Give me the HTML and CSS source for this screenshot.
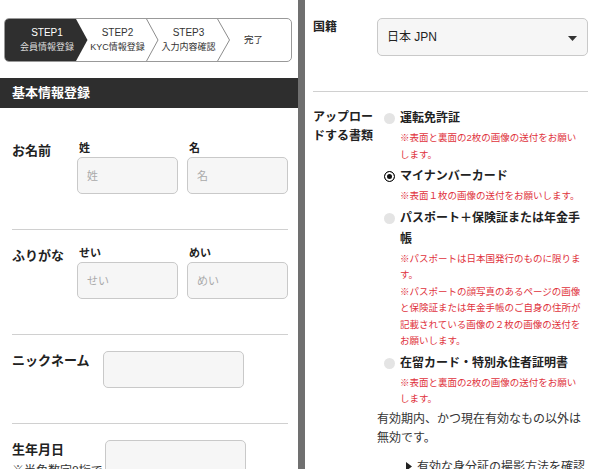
FILE: index.html
```html
<!DOCTYPE html>
<html lang="ja">
<head>
	<title>会員登録</title>
	<meta charset="utf-8">
	<link rel="stylesheet" href="styles.css">
</head>
<body>
	<div class="screens">
		<div class="screen screen_left">
			<div class="steps">
				<svg class="steps_bg" viewBox="0 0 286 42" preserveAspectRatio="none">
					<polygon points="0,0 71,0 82.5,21 71,42 0,42" fill="#2f2f2f"/>
					<polyline points="141,-1 153,21 141,43" fill="none" stroke="#8c8c8c" stroke-width="1"/>
					<polyline points="212,-1 224.5,21 212,43" fill="none" stroke="#8c8c8c" stroke-width="1"/>
				</svg>
				<div class="step step_current">
					<span class="step_name">STEP1</span>
					<span>会員情報登録</span>
				</div>
				<div class="step">
					<span class="step_name">STEP2</span>
					<span>KYC情報登録</span>
				</div>
				<div class="step">
					<span class="step_name">STEP3</span>
					<span>入力内容確認</span>
				</div>
				<div class="step step_last">
					<span>完了</span>
				</div>
			</div>

			<h2 class="section_title">基本情報登録</h2>

			<div class="form">
				<div class="row">
					<div class="row_label">お名前</div>
					<div class="name_fields">
						<div class="field">
							<div class="field_label">姓</div>
							<input class="text_input" type="text" placeholder="姓">
						</div>
						<div class="field">
							<div class="field_label">名</div>
							<input class="text_input" type="text" placeholder="名">
						</div>
					</div>
				</div>
				<div class="row">
					<div class="row_label">ふりがな</div>
					<div class="name_fields">
						<div class="field">
							<div class="field_label">せい</div>
							<input class="text_input" type="text" placeholder="せい">
						</div>
						<div class="field">
							<div class="field_label">めい</div>
							<input class="text_input" type="text" placeholder="めい">
						</div>
					</div>
				</div>
				<div class="row">
					<div class="row_label label_nick">ニックネーム</div>
					<input class="text_input text_input_short" type="text">
				</div>
				<div class="row row_open">
					<div class="row_label label_birth">生年月日
						<div class="row_hint">※半角数字8桁で</div>
					</div>
					<input class="text_input text_input_short" type="text">
				</div>
			</div>
		</div>

		<div class="screen_divider"></div>

		<div class="screen screen_right">
			<div class="row row_first">
				<div class="row_label">国籍</div>
				<div class="select_wrap">
					<select class="select">
						<option>日本 JPN</option>
					</select>
					<svg class="select_caret" viewBox="0 0 9 5"><polygon points="0,0 9,0 4.5,5" fill="#333"/></svg>
				</div>
			</div>
			<div class="row row_open">
				<div class="row_label">アップロードする書類</div>
				<div class="upload">
					<div class="options">
						<div class="option">
							<span class="radio"></span>
							<div class="option_body">
								<div class="option_title">運転免許証</div>
								<p class="note">※表面と裏面の2枚の画像の送付をお願いします。</p>
							</div>
						</div>
						<div class="option">
							<span class="radio radio_checked"></span>
							<div class="option_body">
								<div class="option_title">マイナンバーカード</div>
								<p class="note">※表面１枚の画像の送付をお願いします。</p>
							</div>
						</div>
						<div class="option">
							<span class="radio"></span>
							<div class="option_body">
								<div class="option_title">パスポート＋保険証または年金手帳</div>
								<p class="note">※パスポートは日本国発行のものに限ります。</p>
								<p class="note">※パスポートの顔写真のあるページの画像と保険証または年金手帳のご自身の住所が記載されている画像の２枚の画像の送付をお願いします。</p>
							</div>
						</div>
						<div class="option">
							<span class="radio"></span>
							<div class="option_body">
								<div class="option_title">在留カード・特別永住者証明書</div>
								<p class="note">※表面と裏面の2枚の画像の送付をお願いします。</p>
							</div>
						</div>
					</div>
					<p class="valid_note">有効期内、かつ現在有効なもの以外は無効です。</p>
					<a class="howto">
						<svg class="howto_arrow" viewBox="0 0 6 9"><polygon points="0,0 6,4.5 0,9" fill="#222"/></svg>
						有効な身分証の撮影方法を確認
					</a>
				</div>
			</div>
		</div>
	</div>
</body>
</html>
```

FILE: styles.css
```css
*{
	box-sizing:border-box;
	margin:0;
	padding:0;
}
body{
	font-family:"Liberation Sans","Noto Sans CJK JP",sans-serif;
	color:#222;
	background:#fff;
}
.screens{
	display:flex;
	height:469px;
	overflow:hidden;
}
.screen_left{
	width:298px;
	flex:none;
}
.screen_divider{
	width:7px;
	flex:none;
	background:#707070;
}
.screen_right{
	flex:1;
	padding:0 12px 0 8px;
}

/* step bar */
.steps{
	position:relative;
	display:flex;
	height:44px;
	margin:18px 6px 0 4px;
	padding-left:7px;
	border:1px solid #999;
	border-radius:5px;
	overflow:hidden;
}
.steps_bg{
	position:absolute;
	left:0;
	top:0;
	width:100%;
	height:100%;
}
.step{
	position:relative;
	width:71px;
	flex:none;
	display:flex;
	flex-direction:column;
	justify-content:center;
	align-items:center;
	font-size:9px;
	line-height:14px;
	color:#333;
	white-space:nowrap;
}
.step:first-of-type{
	width:70px;
}
.step_name{
	font-size:10px;
}
.step_current{
	color:#ddd;
}
.step_current .step_name{
	color:#fff;
}
.step_last{
	flex:1;
	padding-right:8px;
	font-size:9.5px;
}

.section_title{
	margin-top:16px;
	height:30px;
	padding-left:12px;
	background:#2e2e2e;
	color:#fff;
	font-size:13px;
	line-height:30px;
}

/* form rows */
.form{
	padding:17px 10px 0 12px;
}
.row{
	display:flex;
	align-items:flex-start;
	padding:16px 0 35px;
	border-bottom:1px solid #d0d0d0;
}
.row_open{
	border-bottom:none;
}
.row_first{
	padding-top:18px;
}
.row_label{
	flex:none;
	width:65px;
	font-size:13px;
	font-weight:bold;
	line-height:19px;
}
.label_nick{
	width:91px;
}
.label_birth{
	width:93px;
}
.row_hint{
	margin-top:4px;
	font-size:12px;
	font-weight:normal;
	line-height:16px;
	color:#333;
	white-space:nowrap;
}
.name_fields{
	flex:1;
	display:grid;
	grid-template-columns:1fr 1fr;
	column-gap:9px;
}
.field_label{
	padding-left:2px;
	margin-bottom:2px;
	font-size:11px;
	font-weight:bold;
	line-height:14px;
}
.text_input{
	display:block;
	width:100%;
	height:37px;
	padding:0 9px;
	border:1px solid #c9c9c9;
	border-radius:5px;
	background:#f6f6f6;
	font-family:inherit;
	font-size:11px;
	color:#222;
}
.text_input::placeholder{
	color:#aaa;
}
.text_input_short{
	width:141px;
}

/* right screen */
.screen_right .row_label{
	width:64px;
	font-size:12px;
}
.select_wrap{
	position:relative;
	flex:1;
}
.select{
	appearance:none;
	-webkit-appearance:none;
	display:block;
	width:100%;
	height:38px;
	padding:0 30px 0 9px;
	border:1px solid #c9c9c9;
	border-radius:5px;
	background:#f6f6f6;
	font-family:inherit;
	font-size:12px;
	color:#222;
}
.select_caret{
	position:absolute;
	right:11px;
	top:18px;
	width:9px;
	height:5px;
}
.upload{
	flex:1;
}
.options{
	padding:0 4px 0 7px;
}
.option{
	display:grid;
	grid-template-columns:11px 1fr;
	column-gap:5px;
	margin-top:3px;
}
.option:first-child{
	margin-top:0;
}
.radio{
	width:11px;
	height:11px;
	margin-top:5px;
	border-radius:50%;
	background:#e4e4e4;
}
.radio_checked{
	background:#111;
	border:1.5px solid #111;
	box-shadow:inset 0 0 0 2px #fff;
}
.option_title{
	font-size:12px;
	font-weight:bold;
	line-height:21px;
}
.note{
	margin-top:1px;
	font-size:9.5px;
	line-height:16.5px;
	color:#e0323c;
}
.note + .note{
	margin-top:0;
}
.valid_note{
	margin-top:2px;
	font-size:12px;
	line-height:19.5px;
	color:#333;
}
.howto{
	display:flex;
	align-items:center;
	gap:5px;
	margin-top:9px;
	padding-left:29px;
	font-size:12px;
	line-height:18px;
	color:#333;
}
.howto_arrow{
	width:6px;
	height:9px;
}
```
